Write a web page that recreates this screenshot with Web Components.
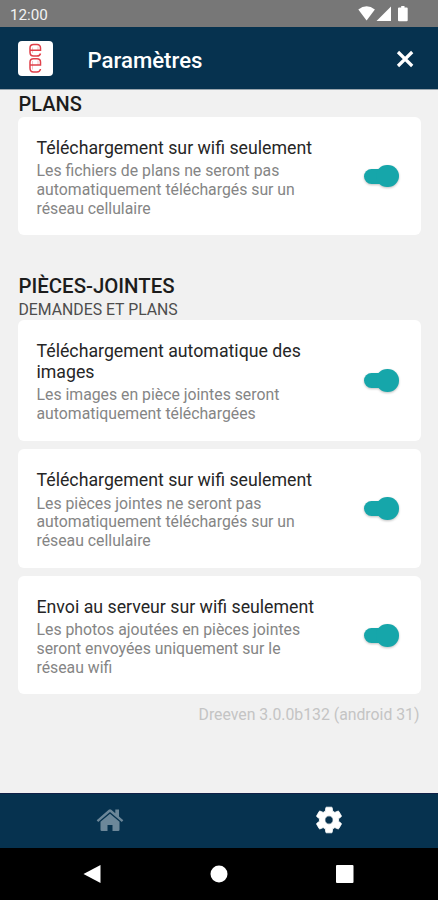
<!DOCTYPE html>
<html lang="fr"><head><meta charset="utf-8"><title>Paramètres</title>
<style>html,body{margin:0;height:100%}body{font-family:Roboto,"Liberation Sans",sans-serif;background:#f1f1f1;overflow:hidden}</style>
</head><body>
<settings-app>
  <status-bar slot="top">12:00</status-bar>
  <app-header slot="top">Paramètres</app-header>
  <settings-section heading="PLANS">
    <setting-card><span slot="title">Téléchargement sur wifi seulement</span>Les fichiers de plans ne seront pas<br>automatiquement téléchargés sur un<br>réseau cellulaire</setting-card>
  </settings-section>
  <settings-section heading="PIÈCES-JOINTES" sub="DEMANDES ET PLANS">
    <setting-card><span slot="title">Téléchargement automatique des<br>images</span>Les images en pièce jointes seront<br>automatiquement téléchargées</setting-card>
    <setting-card><span slot="title">Téléchargement sur wifi seulement</span>Les pièces jointes ne seront pas<br>automatiquement téléchargés sur un<br>réseau cellulaire</setting-card>
    <setting-card><span slot="title">Envoi au serveur sur wifi seulement</span>Les photos ajoutées en pièces jointes<br>seront envoyées uniquement sur le<br>réseau wifi</setting-card>
  </settings-section>
  <version-label>Dreeven 3.0.0b132 (android 31)</version-label>
  <tab-bar slot="bottom"></tab-bar>
  <system-nav slot="bottom"></system-nav>
</settings-app>
<script>
const define = (name, html, setup) => {
  const template = document.createElement('template');
  template.innerHTML = html;
  customElements.define(name, class extends HTMLElement {
    constructor() {
      super();
      this.attachShadow({ mode: 'open' }).append(template.content.cloneNode(true));
    }
    connectedCallback() { if (setup) setup(this, this.shadowRoot); }
  });
};

define('settings-app', `<style>
:host{display:flex;flex-direction:column;width:438px;height:900px;background:#f1f1f1}
main{flex:1;min-height:0;padding:0 17.5px 0 18px;overflow:hidden}
</style><slot name="top"></slot><main><slot></slot></main><slot name="bottom"></slot>`);

define('status-bar', `<style>
:host{display:flex;box-sizing:border-box;height:27px;flex:none;background:#777;color:#f2f2f2;font-size:15.2px;line-height:18px;padding:6px 0 0 10px;justify-content:space-between}
svg{display:block;width:60px;height:18px;margin:-1px 22px 0 0}
</style><slot></slot><svg viewBox="356 5 60 18" fill="#fff"><path d="M358.3 9.600Q366.600 3 374.900 9.600L366.600 20.600Z"/><path d="M376.500 21 391 6.600V21Z"/><path d="M399 7.500h2.200v-1.500h3.300v1.500h2.200a1 1 0 0 1 1 1v11.700a1 1 0 0 1-1 1h-7.700a1 1 0 0 1-1-1V8.500a1 1 0 0 1 1-1z"/></svg>`);

define('app-header', `<style>
:host{display:flex;box-sizing:border-box;height:63px;flex:none;align-items:center;background:#06324f;color:#fff;padding:0 24px 0 18px;border-bottom:1px solid #9aa6ae}
.logo{width:35px;height:35px;flex:none}
h1{flex:1;margin:3px 0 0 34.500px;font-size:22.2px;font-weight:500;line-height:28px}
.close{width:20px;height:20px;margin:1px -1px 0 0}
</style>
<svg class="logo" viewBox="0 0 35 35"><rect width="35" height="35" rx="4" fill="#fff"/><g fill="none" stroke="#e0404a" stroke-width="1.500"><path d="M12.500 9.300H22.500V7Q22.500 3.600 19 3.600H15.500Q12 3.600 12 7V11.200Q12 15 15.500 15H19Q22 15 22.500 12.500"/><path d="M12.500 24H22.500V21Q22.500 17.700 19 17.700H15.500Q12 17.700 12 21V27Q12 31 15.500 31H19Q22 31 22.500 28"/><path d="M14.500 6.500V12M20 5.500V9M14.500 20V28.500M20 19.500V24" stroke-width=".8" opacity=".4"/></g></svg>
<h1><slot></slot></h1>
<svg class="close" viewBox="0 0 20 20"><path d="M3 3 17.200 17M17.200 3 3 17" stroke="#fff" stroke-width="3.200"/></svg>`);

define('settings-section', `<style>
:host{display:block}
:host([sub]){margin-top:38px}
h2{box-sizing:border-box;margin:0;padding-left:.5px;font-size:20px;font-weight:500;line-height:24px;color:#1c1c1c;height:27px;padding-top:2px}
:host([sub]) h2{padding-top:1px;font-size:20.4px;height:26px}
p{box-sizing:border-box;margin:0;padding:1px 0 0 .5px;font-size:15.8px;line-height:20px;height:21px;color:#4d4d4d}
p:empty{display:none}
.list{display:flex;flex-direction:column;gap:8.500px}
</style><h2></h2><p></p><div class="list"><slot></slot></div>`, (el, root) => {
  root.querySelector('h2').textContent = el.getAttribute('heading');
  root.querySelector('p').textContent = el.getAttribute('sub') || '';
});

define('toggle-switch', `<style>
:host{display:flex;align-items:center;width:36px;height:24px;flex:none;margin-bottom:3.500px;filter:drop-shadow(0 1px 1px rgba(0,0,0,.25))}
.track{width:30px;height:15px;border-radius:8px;background:#16a6aa;display:flex;align-items:center}
.thumb{flex:none;width:22.500px;height:22.500px;margin-left:12.500px;border-radius:50%;background:#16a6aa}
</style><div class="track"><div class="thumb"></div></div>`);

define('setting-card', `<style>
:host{display:flex;box-sizing:border-box;align-items:center;justify-content:space-between;background:#fff;border-radius:6px;padding:20.800px 21px 17.200px 18.500px}
.text{white-space:nowrap;font-size:15.8px;line-height:18.600px;color:#858585}
.title{font-size:17.74px;line-height:20.600px;color:#262626;padding-bottom:4px}
</style><div class="text"><div class="title"><slot name="title"></slot></div><slot></slot></div><toggle-switch></toggle-switch>`);

define('version-label', `<style>:host{display:block;text-align:right;font-size:15.8px;line-height:19px;color:#c4c4c4;padding:11px 1px 0 0}</style><slot></slot>`);

define('tab-bar', `<style>
:host{display:grid;box-sizing:border-box;grid-template-columns:1fr 1fr;place-items:center;height:55px;flex:none;background:#06324f;border-top:1px solid #102047}
svg{display:block}
</style>
<svg width="28" height="24" viewBox="0 0 28 24" fill="#6c8799" style="margin-top:-2px"><path d="M14 5.700 23.500 13.700V21.800a1.200 1.200 0 0 1-1.200 1.200H16.500V17H11.500V23H5.700A1.200 1.200 0 0 1 4.500 21.800V13.700Z"/><path d="M.7 12.300 12.700 1.800Q14 .8 15.300 1.800L19.300 5.300V1.500H23V8.500L27.300 12.300 25.800 14 14 4 2.200 14Z"/></svg>
<svg width="32" height="32" viewBox="0 0 24 24" fill="#fff" style="margin-top:-2px"><path stroke="#fff" stroke-width=".6" stroke-linejoin="round" d="M19.140 12.940c.04-.3.06-.61.06-.94 0-.32-.02-.64-.07-.94l2.030-1.580c.18-.14.23-.41.12-.61l-1.920-3.320c-.12-.22-.37-.29-.59-.22l-2.390.96c-.5-.38-1.030-.7-1.620-.94L14.400 2.810c-.04-.24-.24-.41-.48-.41h-3.840c-.24 0-.43.17-.47.41L9.250 5.350C8.660 5.590 8.120 5.920 7.630 6.290L5.240 5.330c-.22-.08-.47 0-.59.22L2.740 8.870c-.12.21-.08.47.12.61l2.030 1.580c-.05.3-.09.63-.09.94s.02.64.07.94l-2.030 1.580c-.18.14-.23.41-.12.61l1.920 3.320c.12.22.37.29.59.22l2.390-.96c.5.38 1.030.7 1.620.94l.36 2.540c.05.24.24.41.48.41h3.840c.24 0 .44-.17.47-.41l.36-2.540c.59-.24 1.130-.56 1.620-.94l2.390.96c.22.08.47 0 .59-.22l1.920-3.320c.12-.22.07-.47-.12-.61ZM12 15.100a3.100 3.100 0 1 1 0-6.200 3.100 3.100 0 0 1 0 6.200Z" fill-rule="evenodd"/></svg>`);

define('system-nav', `<style>
:host{display:flex;box-sizing:border-box;height:52px;flex:none;background:#000;align-items:center;justify-content:space-between;padding:0 84px 0 83px}
svg{display:block}
</style>
<svg width="18" height="20"><path d="M.5 10 17.500 1V19Z" fill="#fff"/></svg>
<svg width="18" height="18" style="margin-left:1px"><circle cx="9" cy="9" r="8.500" fill="#fff"/></svg>
<svg width="18" height="18"><rect width="17.500" height="18" rx="1" fill="#fff"/></svg>`);
</script></body></html>
